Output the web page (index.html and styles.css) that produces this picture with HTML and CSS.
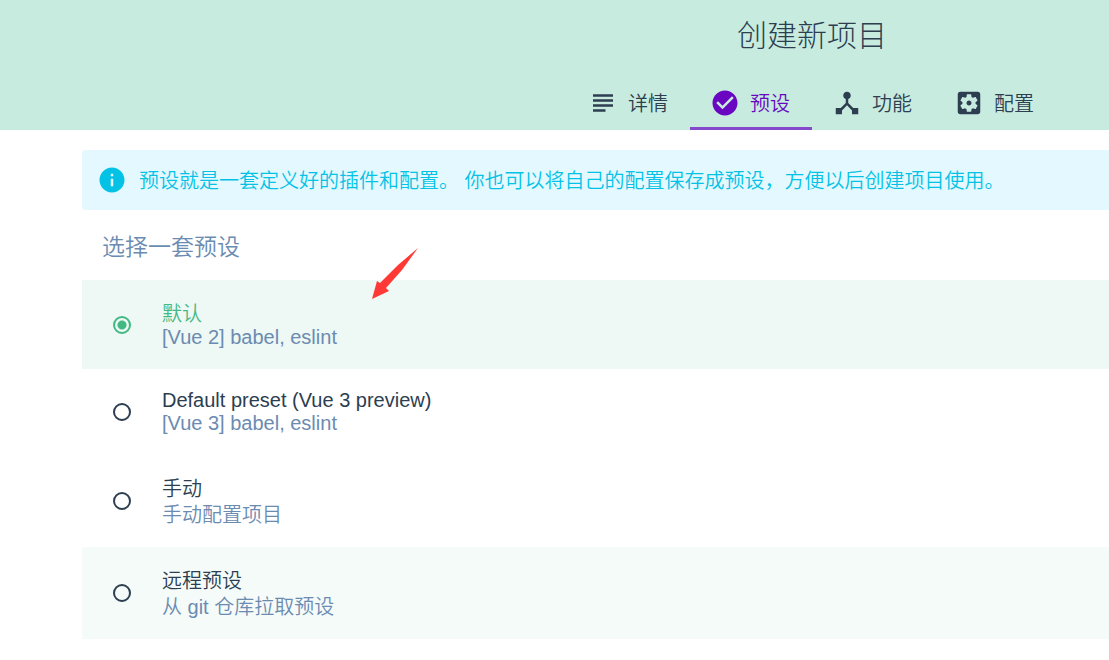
FILE: index.html
```html
<!DOCTYPE html>
<html lang="zh-CN">
<head>
    <meta charset="UTF-8">
    <meta name="viewport" content="width=device-width, initial-scale=1.0">
    <title>创建新项目</title>
    <link rel="stylesheet" href="styles.css">
</head>
<body>
    <header class="header">
        <h1 class="header-title">创建新项目</h1>
        <nav class="tabs">
            <a class="tab" href="#details">
                <svg class="icon" viewBox="0 0 24 24"><path d="M14 17H4v2h10v-2zm6-8H4v2h16V9zM4 15h16v-2H4v2zM4 5v2h16V5H4z"/></svg>
                <span>详情</span>
            </a>
            <a class="tab active" href="#presets">
                <svg class="icon" viewBox="0 0 24 24"><path d="M12 2C6.48 2 2 6.48 2 12s4.48 10 10 10 10-4.48 10-10S17.52 2 12 2zm-2 15l-5-5 1.41-1.41L10 14.17l7.59-7.59L19 8l-9 9z"/></svg>
                <span>预设</span>
            </a>
            <a class="tab" href="#features">
                <svg class="icon" viewBox="0 0 24 24"><path d="M17 16l-4-4V8.82C14.16 8.4 15 7.3 15 6c0-1.66-1.34-3-3-3S9 4.34 9 6c0 1.3.84 2.4 2 2.82V12l-4 4H3v5h5v-3.05l4-4.2 4 4.2V21h5v-5h-4z"/></svg>
                <span>功能</span>
            </a>
            <a class="tab" href="#config">
                <svg class="icon" viewBox="0 0 24 24"><path d="M12 10c-1.1 0-2 .9-2 2s.9 2 2 2 2-.9 2-2-.9-2-2-2zm7-7H5c-1.11 0-2 .9-2 2v14c0 1.1.89 2 2 2h14c1.11 0 2-.9 2-2V5c0-1.1-.89-2-2-2zm-1.75 9c0 .23-.02.46-.05.68l1.48 1.16c.13.11.17.3.08.45l-1.4 2.42c-.09.15-.27.21-.43.15l-1.74-.7c-.36.28-.76.51-1.18.69l-.26 1.85c-.03.17-.18.3-.35.3h-2.8c-.17 0-.32-.13-.35-.29l-.26-1.85c-.43-.18-.82-.41-1.18-.69l-1.74.7c-.16.06-.34 0-.43-.15l-1.4-2.42c-.09-.15-.05-.34.08-.45l1.48-1.16c-.03-.23-.05-.46-.05-.69 0-.23.02-.46.05-.68l-1.48-1.16c-.13-.11-.17-.3-.08-.45l1.4-2.42c.09-.15.27-.21.43-.15l1.74.7c.36-.28.76-.51 1.18-.69l.26-1.85c.03-.17.18-.3.35-.3h2.8c.17 0 .32.13.35.29l.26 1.85c.43.18.82.41 1.18.69l1.74-.7c.16-.06.34 0 .43.15l1.4 2.42c.09.15.05.34-.08.45l-1.48 1.16c.03.23.05.46.05.69z"/></svg>
                <span>配置</span>
            </a>
        </nav>
    </header>

    <main class="content">
        <div class="info-bar">
            <svg class="icon" viewBox="0 0 24 24"><path d="M12 2C6.48 2 2 6.48 2 12s4.48 10 10 10 10-4.48 10-10S17.52 2 12 2zm1 15h-2v-6h2v6zm0-8h-2V7h2v2z"/></svg>
            <p>预设就是一套定义好的插件和配置。 你也可以将自己的配置保存成预设，方便以后创建项目使用。</p>
        </div>

        <form class="presets">
            <h2 class="presets-title">选择一套预设</h2>

            <label class="preset selected">
                <input type="radio" name="preset" value="default" checked>
                <span class="preset-info">
                    <span class="name">默认</span>
                    <span class="description latin">[Vue 2] babel, eslint</span>
                </span>
            </label>

            <label class="preset">
                <input type="radio" name="preset" value="vue3">
                <span class="preset-info">
                    <span class="name latin">Default preset (Vue 3 preview)</span>
                    <span class="description latin">[Vue 3] babel, eslint</span>
                </span>
            </label>

            <label class="preset">
                <input type="radio" name="preset" value="manual">
                <span class="preset-info">
                    <span class="name">手动</span>
                    <span class="description">手动配置项目</span>
                </span>
            </label>

            <label class="preset remote">
                <input type="radio" name="preset" value="remote">
                <span class="preset-info">
                    <span class="name">远程预设</span>
                    <span class="description">从 git 仓库拉取预设</span>
                </span>
            </label>

            <!-- Arrow pointing at the default preset -->
            <svg class="arrow" viewBox="0 0 46 52"><path d="M46 0L26 17 8 35 5 33 0 51 17 43 14 40 30 22z"/></svg>
        </form>
    </main>
</body>
</html>
```
FILE: styles.css
```css
:root {
    --green: #42b983;
    --purple: #6806c1;
    --cyan: #03c2e6;
    --dark: #2c3e50;
    --muted: #6b8bb1;
}

* {
    box-sizing: border-box;
    margin: 0;
    padding: 0;
}

body {
    background: #fff;
    color: var(--dark);
    font-family: "Liberation Sans", "Noto Sans CJK SC", sans-serif;
    font-size: 20px;
    font-weight: 350;
    line-height: 23px;
}

.icon {
    width: 30px;
    height: 30px;
    flex: none;
    fill: currentColor;
}

.header {
    display: flex;
    flex-direction: column;
    align-items: center;
    padding-left: 515px;
    background: #c8ebdf;
}

.header-title {
    padding: 16px 0 20px;
    font-size: 30px;
    font-weight: 300;
    line-height: 40px;
}

.tabs {
    display: flex;
}

.tab {
    display: flex;
    align-items: center;
    gap: 10px;
    height: 54px;
    padding: 0 22px 0 20px;
    color: var(--dark);
    text-decoration: none;
}

.tab span,
.info-bar p {
    padding-top: 3px;
}

.tab.active {
    color: var(--purple);
    box-shadow: inset 0 -3px #8549cb;
}

.content {
    padding: 20px 0 20px 82px;
}

.info-bar {
    display: flex;
    align-items: center;
    gap: 12px;
    min-height: 60px;
    padding: 0 15px;
    border-radius: 4px 0 0 4px;
    background: #e3f9ff;
    color: var(--cyan);
}

.presets {
    position: relative;
}

.presets-title {
    padding: 22px 20px 18px;
    color: var(--muted);
    font-size: 23px;
    font-weight: 350;
    line-height: 30px;
}

.preset {
    display: flex;
    align-items: center;
    gap: 30px;
    padding: 20px 30px;
    cursor: pointer;
}

.preset.selected {
    background: #eef8f4;
}

.preset.remote {
    background: #f5fbf9;
}

.preset input {
    appearance: none;
    width: 18px;
    height: 18px;
    margin: 1px;
    border: 2px solid var(--dark);
    border-radius: 50%;
    cursor: pointer;
}

.preset input:checked {
    border-color: var(--green);
    background: radial-gradient(circle, var(--green) 4px, transparent 5px);
}

.preset-info {
    display: flex;
    flex-direction: column;
}

.preset-info span {
    padding-top: 3px;
}

.preset-info .latin {
    padding-top: 0;
}

.selected .name {
    color: var(--green);
}

.description {
    color: var(--muted);
}

.arrow {
    position: absolute;
    top: 38px;
    left: 290px;
    width: 46px;
    height: 52px;
    fill: #ff3936;
}
```
